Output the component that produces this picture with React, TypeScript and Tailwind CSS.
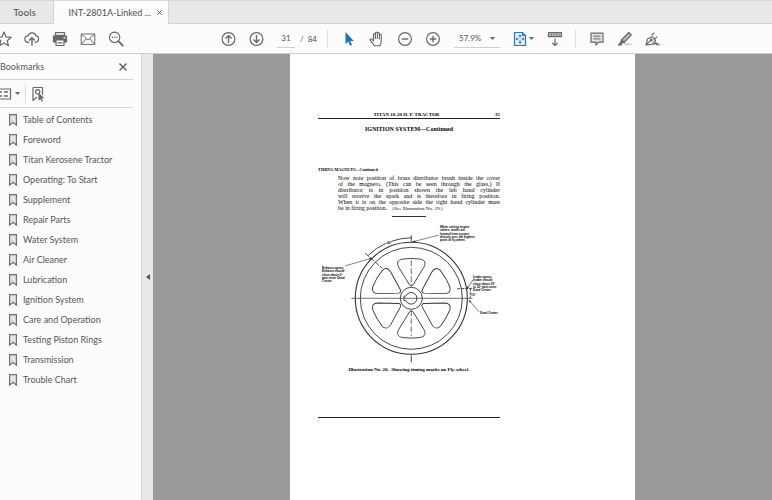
import React from 'react'

interface IconButtonProps {
  label: string
  children: React.ReactNode
  className?: string
}

const bookmarks = [
  'Table of Contents',
  'Foreword',
  'Titan Kerosene Tractor',
  'Operating: To Start',
  'Supplement',
  'Repair Parts',
  'Water System',
  'Air Cleaner',
  'Lubrication',
  'Ignition System',
  'Care and Operation',
  'Testing Piston Rings',
  'Transmission',
  'Trouble Chart',
]

const paragraph = [
  'Now note position of brass distributor brush inside the cover',
  'of the magneto. (This can be seen through the glass.) If',
  'distributor is in position shown the left hand cylinder',
  'will receive the spark and is therefore in firing position.',
  'When it is on the opposite side the right hand cylinder must',
]

const notes = [
  {
    x: 440,
    y: 228,
    lines: ['When setting engine', 'valves, marks are', 'located from a point', 'directly over the highest', 'point of fly-wheel.'],
  },
  {
    x: 322,
    y: 269,
    lines: ['Exhaust opens.', 'Exhaust should', 'close about 5°', 'past inner Dead', 'Center.'],
  },
  {
    x: 473,
    y: 278,
    lines: ['Intake opens.', 'Intake should', 'close about 30°', 'to 35° past outer', 'Dead Center.'],
  },
  { x: 480, y: 314, lines: ['Dead Center.'] },
]

const IconButton: React.FC<IconButtonProps> = ({ label, children, className = 'w-7' }) => (
  <button type="button" aria-label={label} className={`flex h-7 shrink-0 items-center justify-center ${className}`}>
    {children}
  </button>
)

const Icon: React.FC<{ children: React.ReactNode }> = ({ children }) => (
  <svg
    viewBox="0 0 16 16"
    className="h-4 w-4 shrink-0 overflow-visible text-[#686868]"
    fill="none"
    stroke="currentColor"
    strokeWidth="1.2"
    strokeLinejoin="round">
    {children}
  </svg>
)

const Caret: React.FC<{ className: string }> = ({ className }) => (
  <svg viewBox="0 0 5 3" className={`h-[3px] w-[5px] shrink-0 ${className}`} fill="currentColor">
    <path d="M0 0h5L2.5 3z" />
  </svg>
)

const TabBar = () => (
  <div className="flex h-6 shrink-0 border-t border-[#d8d8d8] bg-[#e8e8e8] text-[#505050]">
    <button type="button" className="w-[54px] border-r border-b border-[#d4d4d4] pr-1 text-[10px]">
      Tools
    </button>
    <div className="flex w-[115px] items-center justify-end gap-[6px] border-r border-[#d4d4d4] bg-[#fcfcfc] pr-[6px]">
      <span className="text-[9px] whitespace-nowrap">INT-2801A-Linked ...</span>
      <button type="button" aria-label="Close tab">
        <svg viewBox="0 0 5 5" className="h-[5px] w-[5px]" stroke="#555" strokeWidth="1">
          <path d="M.5.5l4 4M4.5.5l-4 4" />
        </svg>
      </button>
    </div>
    <div className="flex-1 border-b border-[#d4d4d4]" />
  </div>
)

const Toolbar = () => (
  <div className="flex h-[30px] shrink-0 items-center border-b border-[#cfcfcf] bg-[#fcfcfc]">
    <IconButton label="Star" className="-ml-[10px] w-7">
      <Icon>
        <path d="M8 1l2 4.9 5.2.4-4 3.4 1.3 5.1L8 12l-4.5 2.8 1.3-5.1-4-3.4L6 5.9z" />
      </Icon>
    </IconButton>
    <IconButton label="Upload">
      <Icon>
        <path d="M5.4 11.3H4.2a3.2 3.2 0 0 1-.3-6.4 4.3 4.3 0 0 1 8.2-.2 3.4 3.4 0 0 1-.2 6.6h-1.3" />
        <path d="M8 14.8V7M5.2 9.6L8 6.8l2.8 2.8" strokeWidth="1.4" />
      </Icon>
    </IconButton>
    <IconButton label="Print">
      <Icon>
        <path d="M3.5 1.5h9v3h-9z" fill="#ddd" />
        <path d="M1.5 5h13v6h-13z" fill="currentColor" />
        <path d="M4 9h8v5.5H4z" fill="#fcfcfc" />
        <path d="M5.5 11.8h5" />
        <path d="M11.5 6.8h2" stroke="#fcfcfc" />
      </Icon>
    </IconButton>
    <IconButton label="Email">
      <Icon>
        <path d="M1.2 3h13.6v10.4H1.2zM1.2 3L8 9l6.8-6M1.2 13.4l5-5.6M14.8 13.4l-5-5.6" strokeWidth="1" />
      </Icon>
    </IconButton>
    <IconButton label="Search">
      <Icon>
        <circle cx="6.6" cy="6.3" r="5.2" />
        <path d="M10.4 10.2l4.8 4.8" strokeWidth="1.8" />
        <path d="M3.8 6.3h1.2M6 6.3h1.2M8.2 6.3h1.2" strokeWidth="1.3" />
      </Icon>
    </IconButton>
    <IconButton label="Previous page" className="ml-[84px] w-7">
      <Icon>
        <circle cx="8.5" cy="8" r="6.4" />
        <path d="M8.5 12V4.6M5.5 7.4l3-3 3 3" strokeWidth="1.4" />
      </Icon>
    </IconButton>
    <IconButton label="Next page">
      <Icon>
        <circle cx="8.5" cy="8" r="6.4" />
        <path d="M8.5 4v7.4M5.5 8.6l3 3 3-3" strokeWidth="1.4" />
      </Icon>
    </IconButton>
    <input
      aria-label="Page number"
      defaultValue="31"
      className="ml-[7px] h-[18px] w-[18px] border-b border-[#d0d0d0] text-center text-[8px] text-[#555] outline-none"
    />
    <span className="ml-[5px] w-[22px] text-[8px] whitespace-pre text-[#555]">/  84</span>
    <div className="mr-[7px] ml-[5px] h-[18px] w-px bg-[#dcdcdc]" />
    <IconButton label="Select">
      <Icon>
        <path d="M4.5 1v12.2l2.8-2.6 1.8 4.2 1.9-.8-1.8-4.1h3.6z" fill="#1f6fc0" stroke="none" />
      </Icon>
    </IconButton>
    <IconButton label="Pan">
      <Icon>
        <path
          d="M5.6 14.8C4 13 2.4 10.8 1.2 9.2c-.6-1 .7-1.7 1.5-1l1.8 1.7V3.5c0-1.3 1.9-1.3 1.9 0V7.5 2.2c0-1.4 2-1.4 2 0V7.5 2.6c0-1.3 2-1.3 2 0V8 4.2c0-1.2 1.9-1.2 1.9 0v6c0 2-.7 3.3-1.7 4.6z"
          strokeWidth="1.1"
        />
      </Icon>
    </IconButton>
    <IconButton label="Zoom out">
      <Icon>
        <circle cx="8" cy="8" r="6.4" />
        <path d="M4.8 8h6.4" strokeWidth="1.4" />
      </Icon>
    </IconButton>
    <IconButton label="Zoom in">
      <Icon>
        <circle cx="8" cy="8" r="6.4" />
        <path d="M4.8 8h6.4M8 4.8v6.4" strokeWidth="1.4" />
      </Icon>
    </IconButton>
    <div className="ml-[7px] flex h-[18px] w-[46px] items-center justify-between border-b border-[#d0d0d0] pr-[5px] pl-[5px]">
      <select aria-label="Zoom level" className="w-7 appearance-none text-[8px] text-[#555] outline-none">
        <option>57.9%</option>
      </select>
      <Caret className="text-[#666]" />
    </div>
    <IconButton label="Fit page" className="ml-3 w-[22px] gap-[2px]">
      <svg viewBox="0 0 14 16" className="h-4 w-[14px] shrink-0" fill="none" stroke="#2a74c0" strokeWidth="1.2">
        <path d="M1.5 1.5h8l3 3v10h-11z" fill="#e3eef9" />
        <path d="M9.5 1.5v3h3" />
        <path d="M7 4v2.5M7 9.5v2.5M3 8h2.5M8.5 8H11" />
        <path d="M7 3.4L5.5 5.3h3zM7 12.9l-1.5-1.9h3zM2.5 8l1.8-1.5v3zM11.5 8L9.7 6.5v3z" fill="#2a74c0" stroke="none" />
      </svg>
      <Caret className="text-[#2a74c0]" />
    </IconButton>
    <IconButton label="Scroll mode" className="ml-[7px] w-7">
      <Icon>
        <path d="M1.5 1.7h13v4h-13z" fill="#bbb" />
        <path d="M4.5 3v1.5M7 3v1.5M9.5 3v1.5M12 3v1.5" strokeWidth="1" />
        <path d="M8 7.5v6.8M5.3 11.8L8 14.5l2.7-2.7" />
      </Icon>
    </IconButton>
    <div className="mx-[6px] h-[18px] w-px bg-[#dcdcdc]" />
    <IconButton label="Comment">
      <Icon>
        <path d="M3 2.2h12v9h-4.5L8 14v-2.8H3z" fill="#e2e2e2" />
        <path d="M5.5 5.2h7M5.5 7.9h7" strokeWidth="1" />
      </Icon>
    </IconButton>
    <IconButton label="Highlight">
      <Icon>
        <path d="M8 13.2h7.5" stroke="#d5d5d5" strokeWidth="2" />
        <path d="M5.5 9l7.3-7.5 2.5 2.4L8 11.5z" fill="#bbb" />
        <path d="M5.5 9l-1.3 3.5L8 11.5zM4.2 12.2L2.5 14h3z" fill="currentColor" />
      </Icon>
    </IconButton>
    <IconButton label="Sign">
      <Icon>
        <path d="M2 14l1.5-6.2 5-2 3 3.7-3.2 3.7zM2.2 13.8l4.6-4.6" />
        <circle cx="7.2" cy="8.9" r="0.9" fill="currentColor" />
        <path d="M7.2 4.6l3.2-2.8M10.600 8.200l2.600-2.600" />
        <path d="M9.5 13.8l2.5-2.3.3 2.3 1.500-1.500.4 1.500h1.600" strokeWidth="1.1" />
      </Icon>
    </IconButton>
  </div>
)

const Sidebar = () => (
  <aside className="flex w-[142px] shrink-0 flex-col border-r border-[#d4d4d4] bg-[#fcfcfc] text-[#555]">
    <div className="mr-2 flex h-[26px] items-center justify-between border-b border-[#d4d4d4] pr-[6px]">
      <h2 className="text-[9px]">Bookmarks</h2>
      <button type="button" aria-label="Close panel">
        <svg viewBox="0 0 8 8" className="h-2 w-2" stroke="#555" strokeWidth="1.3">
          <path d="M.5.5l7 7M7.5.5l-7 7" />
        </svg>
      </button>
    </div>
    <div className="mr-2 flex h-7 items-center border-b border-[#d4d4d4]">
      <IconButton label="Options" className="-ml-1 w-[23px] gap-[3px]">
        <Icon>
          <path d="M1 3h13.5v10H1z" />
          <path d="M4 6h2M4 10h2M8 6h4M8 10h4" strokeWidth="1.5" />
        </Icon>
        <Caret className="text-[#666]" />
      </IconButton>
      <div className="ml-[6px] h-[18px] w-px bg-[#dcdcdc]" />
      <IconButton label="Find bookmark" className="w-[23px]">
        <Icon>
          <path d="M3 1.5h9.500V9M3 1.5v13L7 11" />
          <circle cx="7.7" cy="5.8" r="2.2" />
          <path d="M8.5 6.8v8l2-1.6 1.2 2.3 1.3-.6-1.2-2.4 2.6-.2z" fill="currentColor" stroke="none" />
        </Icon>
      </IconButton>
    </div>
    <nav className="flex flex-col pt-[2px]">
      {bookmarks.map((name) => (
        <a key={name} href="#" className="flex h-5 items-center gap-[6px] pl-[9px] text-[9px] whitespace-nowrap">
          <svg viewBox="0 0 8 12" className="h-3 w-2 shrink-0" fill="#e4e4e4" stroke="#707070" strokeWidth="1.2">
            <path d="M.6.6h6.8v10.6L4 8.4.6 11.2z" />
          </svg>
          {name}
        </a>
      ))}
    </nav>
  </aside>
)

const FlyWheel = () => (
  <svg
    viewBox="318 220 182 144"
    className="h-36 w-full overflow-visible"
    fill="none"
    stroke="#333"
    strokeWidth="0.9"
    role="img"
    aria-label="Timing marks on fly-wheel">
    <g transform="translate(411.3 298.3)">
      <circle r="56" strokeWidth="1.1" />
      <circle r="51" />
      <circle r="11" />
      <path d="M-5.5 -2.2A5.8 5.8 0 1 1 -5.5 2.2H-7.3V-2.2z" />
      {[0, 60, 120, 180, 240, 300].map((angle) => (
        <path
          key={angle}
          transform={`rotate(${angle})`}
          d="M-1.8 -13.5L-12.5 -31C-15 -35.5 -13.5 -38.3 -9 -39.2Q0 -40.5 9 -39.2C13.5 -38.3 15 -35.5 12.5 -31L1.8 -13.5Q0 -11.5 -1.8 -13.5z"
        />
      ))}
      <path d="M-60 0H61" strokeWidth="0.7" />
      <path d="M0 -63V-57M0 57V64" />
      <path d="M0 -38V-12M0 12V38" strokeDasharray="6 2" strokeWidth="0.7" />
      <path d="M-43 -43A60.5 60.5 0 0 1 -25 -55.2M-20 -57A60.5 60.5 0 0 1 0 -60.5" />
      <path d="M-46 -45L-29 -30" strokeDasharray="5 1.5" />
      <path d="M46 -9.5L61 -10M59 -10V0" strokeDasharray="3 1" />
    </g>
    <path d="M439 235L412 242M345 266L372 258M473 280L467 289M479 312L469 300" strokeWidth="0.6" />
    <path d="M412 242l3-1.6.4 1.6zM372 258l-3-.1.4 1.6zM467 289l.5-3 1.3.9zM469 300l.8 2.8 1.4-1.1z" fill="#222" stroke="none" />
    <g className="font-['Liberation_Sans',sans-serif] text-[3px] font-bold" fill="#000" stroke="none">
      {notes.map((note) =>
        note.lines.map((line, index) => (
          <text key={line} x={note.x} y={note.y + Math.round((index * 10) / 3)}>
            {line}
          </text>
        )),
      )}
      <text x="387" y="244">
        40°
      </text>
      <text x="471" y="296">
        10°
      </text>
    </g>
  </svg>
)

const ScannedPage = () => (
  <article className="w-[345px] bg-white pt-[57px] pl-7 font-['Liberation_Serif',serif] text-black">
    <div className="flex w-[182px] flex-col">
      <header className="flex h-2 items-center justify-end border-b border-[#222] text-[5px] leading-[6px] font-bold">
        <span className="flex-1 text-center">TITAN 10-20 H. P. TRACTOR</span>
        <span>35</span>
      </header>
      <h1 className="mt-[6px] text-center text-[6px] leading-[8px] font-bold">IGNITION SYSTEM—Continued</h1>
      <h2 className="mt-[34px] text-[4px] leading-[6px] font-bold">TIMING MAGNETO—Continued</h2>
      <div className="mt-[2px] ml-5 text-[6px] leading-[6px] whitespace-nowrap">
        {paragraph.map((line) => (
          <p key={line} className="[text-align-last:justify]">
            {line}
          </p>
        ))}
        <p>
          be in firing position. <span className="ml-1 text-[5px]">(See Illustration No. 19.)</span>
        </p>
      </div>
      <hr className="mx-auto mt-1 mb-[3px] w-[34px] border-[#333]" />
      <FlyWheel />
      <p className="mt-[3px] text-center text-[5px] leading-[6px] font-bold whitespace-pre">
        Illustration No. 20.  Showing timing marks on Fly-wheel.
      </p>
      <hr className="mt-11 border-[#222]" />
    </div>
  </article>
)

const App = () => (
  <div className="flex h-screen flex-col overflow-hidden bg-white font-['Lato',sans-serif]">
    <TabBar />
    <Toolbar />
    <div className="flex min-h-0 flex-1">
      <Sidebar />
      <button type="button" aria-label="Collapse panel" className="flex w-[11px] shrink-0 items-center justify-center bg-[#e8e8e8]">
        <svg viewBox="0 0 4 6" className="h-[6px] w-1" fill="#555">
          <path d="M4 0v6L0 3z" />
        </svg>
      </button>
      <main className="flex flex-1 justify-center bg-[#999]">
        <ScannedPage />
      </main>
    </div>
  </div>
)

export default App
